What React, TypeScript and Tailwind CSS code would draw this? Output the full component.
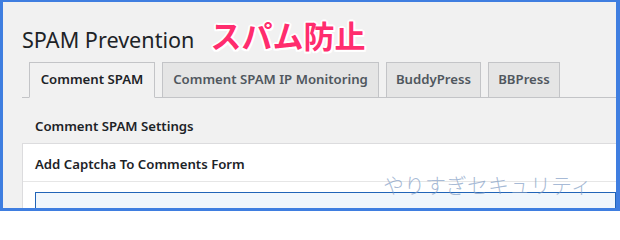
import React from "react";

const tabs = [
  { label: "Comment SPAM", w: "w-[126px]", active: true },
  { label: "Comment SPAM IP Monitoring", w: "w-[217px]", active: false },
  { label: "BuddyPress", w: "w-[95px]", active: false },
  { label: "BBPress", w: "w-[72px]", active: false },
];

export default function App() {
  return (
    <div className="relative w-[620px] h-[211px] overflow-hidden bg-[#f1f1f1] border-[#3f7ee0] border-t-2 border-l-[3px] border-r-4 border-b-[3px] font-['Noto_Sans',sans-serif]">
      <div className="pl-[19px]">
        <div className="flex items-baseline h-[60px] pt-[18px]">
          <h1 className="text-[21.6px] leading-[30px] font-normal text-[#1d2327]">SPAM Prevention</h1>
          <span className="ml-[16px] text-[31px] leading-[30px] font-bold text-[#ff2d6e] font-['Noto_Sans_CJK_JP',sans-serif] [text-shadow:2px_0_0_#fff,-2px_0_0_#fff,0_2px_0_#fff,0_-2px_0_#fff,1.5px_1.5px_0_#fff,-1.5px_1.5px_0_#fff,1.5px_-1.5px_0_#fff,-1.5px_-1.5px_0_#fff]">
            スパム防止
          </span>
        </div>
        <div className="flex items-end gap-[7px] pl-[7px] border-b border-[#c3c4c7]">
          {tabs.map((t) => (
            <div
              key={t.label}
              className={
                t.active
                  ? "w-[126px] h-[36px] -mb-px flex items-center justify-center border border-[#c3c4c7] border-b-[#f1f1f1] bg-[#f1f1f1] text-[13.2px] font-semibold text-[#1d2327]"
                  : t.w + " h-[36px] -mb-px flex items-center justify-center border border-[#c3c4c7] bg-[#e5e5e5] text-[13.2px] font-semibold text-[#50575e]"
              }
            >
              {t.label}
            </div>
          ))}
        </div>
        <div className="pt-[18px] pb-[7px] pl-[13px] text-[13.2px] leading-5 font-semibold text-[#1d2327]">
          Comment SPAM Settings
        </div>
        <div className="bg-white border-t border-l border-[#dcdcde]">
          <div className="pt-[10px] pb-[7px] pl-[12px] text-[13.2px] leading-5 font-semibold text-[#1d2327] border-b border-[#e6e6e6]">
            Add Captcha To Comments Form
          </div>
          <div className="pt-[10px] pl-[12px]">
            <div className="h-[40px] border border-[#2164b8] bg-[#f0f6fc]" />
          </div>
        </div>
      </div>
      <div className="absolute left-[380px] top-[169px] text-[21px] leading-[26px] font-light text-[#7f9cc4]/70 font-['Noto_Sans_CJK_JP',sans-serif] whitespace-nowrap">
        やりすぎセキュリティ
      </div>
    </div>
  );
}
